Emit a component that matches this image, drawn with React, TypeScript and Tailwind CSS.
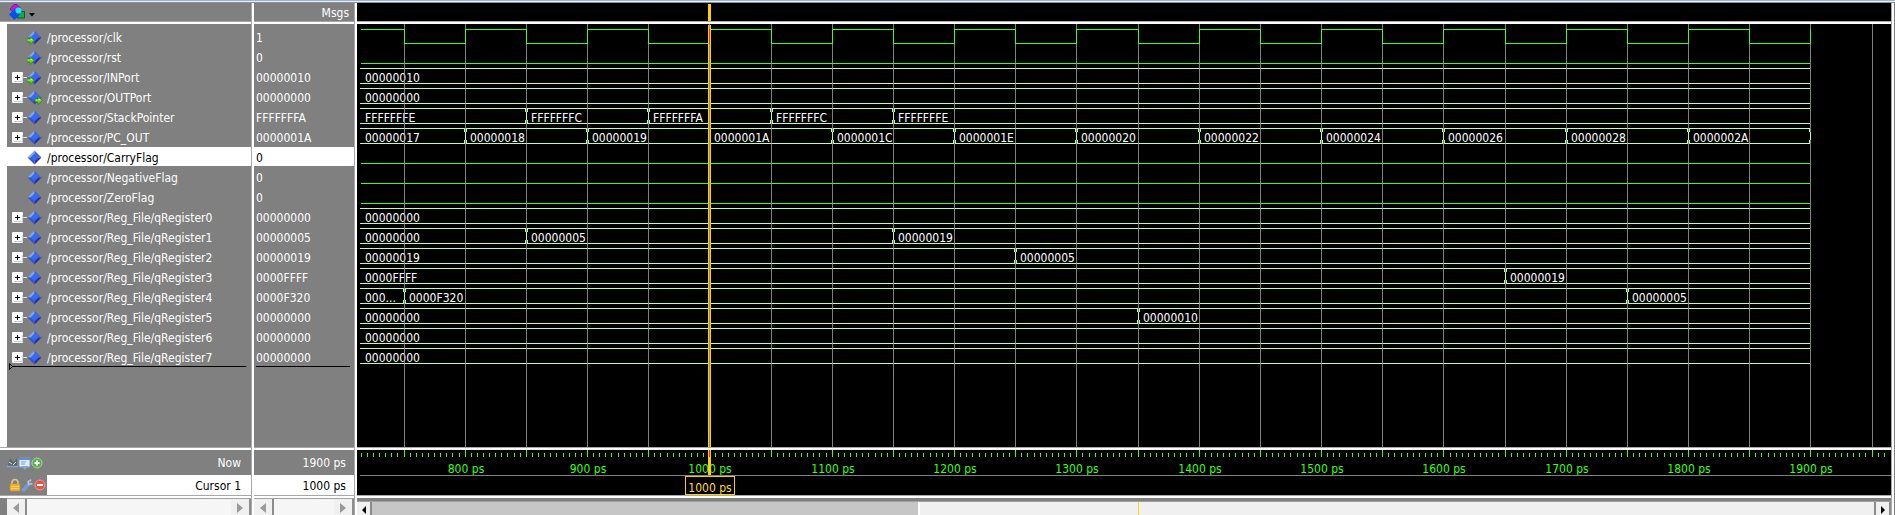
import React from "react";

const T = "font-['DejaVu_Sans_Condensed','DejaVu_Sans',sans-serif] text-[12px] leading-[20px]";

type Segment = [number, string];
type Signal = {
  name: string;
  value: string;
  port?: "in" | "out";
  kind: "clock" | "low" | "bus";
  segments?: Segment[];
};

const zero: Segment[] = [[0, "00000000"]];

const signals: Signal[] = [
  { name: "/processor/clk", value: "1", port: "in", kind: "clock" },
  { name: "/processor/rst", value: "0", port: "in", kind: "low" },
  { name: "/processor/INPort", value: "00000010", port: "in", kind: "bus", segments: [[0, "00000010"]] },
  { name: "/processor/OUTPort", value: "00000000", port: "out", kind: "bus", segments: zero },
  {
    name: "/processor/StackPointer", value: "FFFFFFFA", kind: "bus",
    segments: [[0, "FFFFFFFE"], [850, "FFFFFFFC"], [950, "FFFFFFFA"], [1050, "FFFFFFFC"], [1150, "FFFFFFFE"]],
  },
  {
    name: "/processor/PC_OUT", value: "0000001A", kind: "bus",
    segments: [
      [0, "00000017"], [800, "00000018"], [900, "00000019"], [1000, "0000001A"], [1100, "0000001C"],
      [1200, "0000001E"], [1300, "00000020"], [1400, "00000022"], [1500, "00000024"], [1600, "00000026"],
      [1700, "00000028"], [1800, "0000002A"], [1900, ""],
    ],
  },
  { name: "/processor/CarryFlag", value: "0", kind: "low" },
  { name: "/processor/NegativeFlag", value: "0", kind: "low" },
  { name: "/processor/ZeroFlag", value: "0", kind: "low" },
  { name: "/processor/Reg_File/qRegister0", value: "00000000", kind: "bus", segments: zero },
  { name: "/processor/Reg_File/qRegister1", value: "00000005", kind: "bus", segments: [[0, "00000000"], [850, "00000005"], [1150, "00000019"]] },
  { name: "/processor/Reg_File/qRegister2", value: "00000019", kind: "bus", segments: [[0, "00000019"], [1250, "00000005"]] },
  { name: "/processor/Reg_File/qRegister3", value: "0000FFFF", kind: "bus", segments: [[0, "0000FFFF"], [1650, "00000019"]] },
  { name: "/processor/Reg_File/qRegister4", value: "0000F320", kind: "bus", segments: [[0, "000..."], [750, "0000F320"], [1750, "00000005"]] },
  { name: "/processor/Reg_File/qRegister5", value: "00000000", kind: "bus", segments: [[0, "00000000"], [1350, "00000010"]] },
  { name: "/processor/Reg_File/qRegister6", value: "00000000", kind: "bus", segments: zero },
  { name: "/processor/Reg_File/qRegister7", value: "00000000", kind: "bus", segments: zero },
];

const SELECTED = 6;
const END = 1900;
const LEFT = 3;
const ROW = 20;
const TOP = 3;

const xAt = (ps: number) => Math.floor(47.01 + (ps - 750) * 1.2234);
const range = (from: number, to: number, step: number) => {
  const out: number[] = [];
  for (let v = from; v <= to; v += step) out.push(v);
  return out;
};

function Diamond({ port }: { port?: "in" | "out" }) {
  return (
    <svg width="16" height="16" viewBox="0 0 16 16" className="shrink-0" aria-hidden="true">
      <path d="M7.500 .5 .5 7.500h7z" fill="#7ea6f4" />
      <path d="M7.500 .5l7 7h-7z" fill="#4568d4" />
      <path d="M.5 7.500l7 7v-7z" fill="#3f52c8" />
      <path d="M14.500 7.500l-7 7v-7z" fill="#2a2ca0" />
      <path d="M7.500 3.500l4 4-4 4-4-4z" fill="#2f6cf0" />
      {port && (
        <g transform={port === "in" ? "translate(0 0)" : "translate(8 0)"}>
          <path d="M0 9h3V6.500L7.500 10.500 3 14.500V12H0z" fill="#5ed211" stroke="#2b7a10" strokeWidth=".6" />
          <path d="M.5 9.800h3.300V8.500L6 10.300H.5z" fill="#f3ffd0" />
        </g>
      )}
    </svg>
  );
}

function NameRow({ signal, selected }: { signal: Signal; selected: boolean }) {
  return (
    <li className={"flex h-5 items-center border-b border-[#808080] pl-[5px] pt-0.5 " + (selected ? "bg-white text-black" : "text-white")}>
      <span className="flex w-[15px] shrink-0 items-center">
        {signal.kind === "bus" && (
          <button aria-label={"Expand " + signal.name} className="flex w-[15px] items-center">
            <svg width="15" height="11" viewBox="0 0 15 11" aria-hidden="true">
              <rect x="0" y="0" width="11" height="11" rx="1" fill="#fff" />
              <path d="M2 9.500h8.500V3" stroke="#c8ccdc" fill="none" />
              <path d="M3 5.500h5M5.500 3v5" stroke="#000" />
              <path d="M11 5.500h4" stroke="#e4e4e4" />
            </svg>
          </button>
        )}
      </span>
      <Diamond port={signal.port} />
      <span className="ml-1 whitespace-nowrap">{signal.name}</span>
    </li>
  );
}

function Trace({ signal, row }: { signal: Signal; row: number }) {
  const y = TOP + row * ROW;
  const end = xAt(END);
  if (signal.kind === "low") {
    return <path d={`M4 ${y + 16.5}H${end}`} stroke="#3cff14" />;
  }
  if (signal.kind === "clock") {
    let d = `M4 ${y + 2.5}`;
    let high = true;
    for (const t of range(750, END, 50)) {
      high = !high;
      d += `H${xAt(t) + 0.5}V${high ? y + 2.5 : y + 16.5}`;
    }
    return <path d={d} stroke="#3cff14" fill="none" />;
  }
  const segments = signal.segments ?? [];
  return (
    <g>
      <path d={`M${LEFT} ${y + 1.5}H${end}M${LEFT} ${y + 16.5}H${end}`} stroke="#b4ffb4" />
      {segments.map(([t, label], i) => {
        const x = i === 0 ? LEFT : xAt(t);
        const last = t === END;
        return (
          <g key={t}>
            {i > 0 && (
              <>
                <path d={`M${x} ${y + 1.5}h1M${x} ${y + 16.5}h1`} stroke="#000" />
                <path
                  d={
                    `M${x - 0.5} ${y + 2}v3M${x + 0.5} ${y + 5}v8M${x - 0.5} ${y + 13}v4` +
                    (last ? "" : `M${x + 1.5} ${y + 2}v3M${x + 1.5} ${y + 13}v4`)
                  }
                  stroke="#b4ffb4"
                />
              </>
            )}
            <text x={i === 0 ? 8 : x + 5} y={y + 15} fill="#fff">{label}</text>
          </g>
        );
      })}
    </g>
  );
}

function Waves() {
  const cursor = xAt(1000);
  return (
    <svg className="block h-full w-full" aria-label="Waveforms">
      {signals.map((s, i) => <Trace key={s.name} signal={s} row={i} />)}
      {range(750, 1950, 50).map((t) => (
        <rect key={t} x={xAt(t)} y="0" width="1" height="100%" fill="#a0a0a0" fillOpacity=".8" />
      ))}
      <path
        d={range(750, END, 50).map((t) => `M${xAt(t) + 0.5} ${TOP + 2}v15`).join("")}
        stroke="#3cff14"
      />
      {signals.map((s, i) =>
        (s.segments ?? []).slice(1).map(([t]) => (
          <rect key={s.name + t} x={xAt(t)} y={TOP + i * ROW + 5} width="1" height="8" fill="#b4ffb4" />
        )),
      )}
      <rect x={cursor - 1} y="1" width="3" height="100%" fill="#ffd000" />
      <rect x={cursor} y="1" width="1" height="100%" fill="#a09058" />
      <rect x={cursor} y={TOP + 2} width="1" height="15" fill="#d84010" />
    </svg>
  );
}

function Timeline() {
  const cursor = xAt(1000);
  return (
    <svg className="block h-full w-full" aria-label="Timeline">
      {range(715, 1960, 5).map((t) => (
        <rect key={t} x={xAt(t)} y={t % 50 ? 3 : 0} width="1" height={t % 50 ? 4 : 7} fill="#3cff14" />
      ))}
      {range(800, END, 100).map((t) => (
        <text key={t} x={xAt(t) + 1} y="23" textAnchor="middle" fill="#3cff14">{t} ps</text>
      ))}
      <rect x={LEFT} y="25" width="100%" height="1" fill="#808080" />
      <rect x={cursor - 1} y="0" width="3" height="25" fill="#ffd000" />
      <rect x={cursor} y="0" width="1" height="7" fill="#d84010" />
      <rect x={cursor - 23.5} y="26.5" width="49" height="18" fill="none" stroke="#ffd000" />
      <text x={cursor + 1} y="42" textAnchor="middle" fill="#ffd83c">1000 ps</text>
    </svg>
  );
}

function Arrow({ side, active }: { side: "left" | "right"; active?: boolean }) {
  const color = active ? "#000" : "#9a9a9a";
  return (
    <button
      aria-label={"Scroll " + side}
      className={"flex shrink-0 items-center justify-center border-r-2 border-[#8c8c8c] bg-[#f0f0f0] pt-0.5 " + (active ? "w-[15px]" : "w-5")}
    >
      <svg width="6" height="10" viewBox="0 0 6 10" aria-hidden="true">
        <path d={side === "left" ? (active ? "M5 1v8L1 5z" : "M6 0v10L0 5z") : active ? "M1 1v8l4-4z" : "M0 0v10l6-5z"} fill={color} />
      </svg>
    </button>
  );
}

function SideScroll() {
  return (
    <div className="flex h-full border-t border-[#a0a0a0] bg-[#f6f6f6]">
      <Arrow side="left" />
      <div className="flex-1" />
      <Arrow side="right" />
    </div>
  );
}

function ObjectsIcon() {
  return (
    <svg width="26" height="16" viewBox="0 0 26 16" aria-hidden="true">
      <path d="M8.500 7.500h7v6.500h-7z" fill="#18a848" stroke="#075c28" />
      <path d="M1 5l4-4.500h3l4 4-4 3.500H4z" fill="#c018d8" stroke="#500870" strokeWidth=".6" />
      <path d="M5.500 5l5.500 5.500-5.500 5.500L0 10.500z" fill="#0850e8" />
      <circle cx="9.500" cy="6.500" r="3" fill="#18e8f8" />
      <path d="M20 9h6l-3 3.500z" fill="#000" />
    </svg>
  );
}

function NowIcons() {
  return (
    <svg width="36" height="14" viewBox="0 0 36 14" aria-hidden="true">
      <path d="M1 11l1-6 2-3 1 3 2 1 2-3h1v8z" fill="#5c6468" />
      <path d="M0 10.500h11" stroke="#79a7d4" strokeWidth="1.500" />
      <path d="M2 6l3 2M6 9l3-3" stroke="#d6dce0" />
      <rect x="12" y="2" width="11" height="9" rx="1" fill="#dce9fa" stroke="#769fd4" />
      <path d="M12 3h11" stroke="#5d8fd0" strokeWidth="2" />
      <path d="M14 6h5M14 8h4" stroke="#7da4d4" />
      <path d="M15 10h6l-3 4z" fill="#7aa9e8" />
      <circle cx="30" cy="7" r="5" fill="#54b04c" stroke="#a8d8a0" />
      <path d="M27.500 7h5M30 4.500v5" stroke="#fff" strokeWidth="2" />
    </svg>
  );
}

function CursorIcons() {
  return (
    <svg width="37" height="14" viewBox="0 0 37 14" aria-hidden="true">
      <path d="M3 7V4.500a3 3 0 0 1 6 0V7" fill="none" stroke="#d8c690" strokeWidth="1.600" />
      <rect x="1" y="6" width="10" height="7" rx="1" fill="#f0b030" stroke="#e09018" strokeWidth=".6" />
      <path d="M2 8.500h8M2 10.500h8" stroke="#ffd878" strokeWidth=".8" />
      <path d="M14.500 12l5-5.500" stroke="#6c9ce4" strokeWidth="3.400" strokeLinecap="round" />
      <path d="M19 7l2-2M20 2.500c-2 2 0 4.500 3.500 3M22 1.500l-1.500 2" stroke="#b4c4d8" strokeWidth="1.600" fill="none" />
      <circle cx="31" cy="7" r="5" fill="#e85048" stroke="#f09c90" />
      <path d="M28 7h6" stroke="#fff" strokeWidth="2" />
    </svg>
  );
}

export default function App() {
  return (
    <main className={"flex flex-col overflow-hidden border-t border-[#99b4d1] bg-[#808080] " + T}>
      <div className="h-px bg-[#e8eef4]" />
      <div className="h-px bg-[#909090]" />
      <div className="flex">
        <section className="flex w-[252px] shrink-0 flex-col border-r border-[#a8a8a8]" aria-label="Signals">
          <header className="flex h-[19px] items-center border-b border-[#a8a8a8] pl-[9px]">
            <button aria-label="Objects menu"><ObjectsIcon /></button>
          </header>
          <div className="h-0.5 bg-white" />
          <div className="h-[424px] border-b border-[#a8a8a8] bg-white pl-[7px]">
            <div className="h-full bg-[#808080] pt-[3px]">
              <ul>
                {signals.map((s, i) => <NameRow key={s.name} signal={s} selected={i === SELECTED} />)}
              </ul>
              <svg className="-mt-1 block w-full" height="7" aria-hidden="true">
                <path d="M2.500 .5v6l3-3z" fill="none" stroke="#000" />
                <rect x="5" y="3" width="96%" height="1" fill="#000" />
              </svg>
            </div>
          </div>
          <div className="h-0.5 bg-white" />
          <div className="flex h-[25px] items-center justify-between pl-[7px] pr-2.5 text-white">
            <NowIcons />
            <span>Now</span>
          </div>
          <div className="flex h-5 items-center pl-[9px]">
            <span className="w-[38px] shrink-0"><CursorIcons /></span>
            <span className="h-full flex-1 bg-white pr-2.5 pt-px text-right">Cursor 1</span>
          </div>
          <div className="h-[3px] border-t border-[#a8a8a8] bg-white" />
          <div className="h-[17px] pl-[7px]"><SideScroll /></div>
        </section>
        <div className="w-0.5 shrink-0 bg-white" />
        <section className="flex w-[101px] shrink-0 flex-col border-r border-[#a8a8a8]" aria-label="Values">
          <header className="flex h-[19px] items-center justify-end border-b border-[#a8a8a8] pr-[5px] pt-0.5 text-white">Msgs</header>
          <div className="h-0.5 bg-white" />
          <div className="h-[424px] border-b border-[#a8a8a8] pt-[3px]">
            <ul>
              {signals.map((s, i) => (
                <li key={s.name} className={"flex h-5 items-center border-b border-[#808080] pl-0.5 pt-0.5 " + (i === SELECTED ? "bg-white text-black" : "text-white")}>
                  {s.value}
                </li>
              ))}
            </ul>
            <div className="-mt-px ml-0.5 mr-1 h-px bg-black" />
          </div>
          <div className="h-0.5 bg-white" />
          <div className="flex h-[25px] items-center justify-end pr-2 text-white">1900 ps</div>
          <div className="flex h-5 items-center justify-end bg-white pr-2 pt-0.5">1000 ps</div>
          <div className="h-[3px] border-t border-[#a8a8a8] bg-white" />
          <div className="h-[17px]"><SideScroll /></div>
        </section>
        <div className="w-0.5 shrink-0 bg-white" />
        <section className="flex min-w-0 flex-1 flex-col border-r border-[#a8a8a8]" aria-label="Wave">
          <header className="h-[19px] border-b border-[#a8a8a8] bg-black">
            <svg className="block h-full w-full" aria-hidden="true">
              <rect x={xAt(1000) - 1} y="1" width="3" height="17" fill="#ffd000" />
            </svg>
          </header>
          <div className="h-0.5 bg-white" />
          <div className="h-[424px] border-b border-[#a8a8a8] bg-black"><Waves /></div>
          <div className="h-0.5 bg-white" />
          <div className="h-[45px] bg-black"><Timeline /></div>
          <div className="h-[3px] border-t border-[#a8a8a8] bg-white" />
          <div className="h-[17px] pt-[3px]">
            <div className="flex h-full border-t border-[#a0a0a0] bg-[#f0f0f0]">
              <Arrow side="left" active />
              <div className="relative flex-1">
                <div className="h-full w-[36.5%] border-r-2 border-white bg-[#c6c6c6]" />
                <div className="absolute inset-y-0 left-[51%] w-px bg-[#ffd820]" />
              </div>
              <div className="w-0.5 bg-[#8c8c8c]" />
              <Arrow side="right" active />
            </div>
          </div>
        </section>
        <div className="w-0.5 shrink-0 bg-white" />
        <div className="w-px shrink-0 bg-[#808080]" />
      </div>
    </main>
  );
}
